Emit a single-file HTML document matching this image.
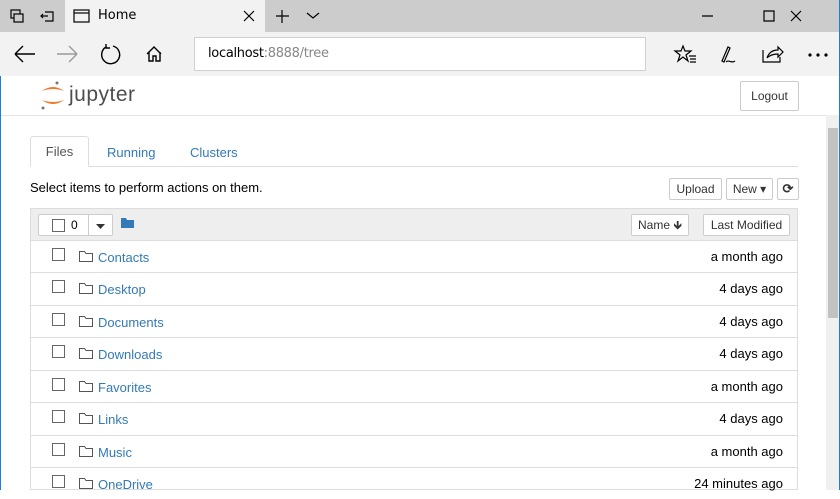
<!DOCTYPE html><html><head><style>
*{box-sizing:border-box;margin:0;padding:0}
body{width:840px;height:490px;overflow:hidden;position:relative;background:#fff;font-family:"Liberation Sans",sans-serif;font-size:13px;color:#000}
.a{position:absolute}
.tb{left:0;top:0;width:840px;height:32px;background:#cccccc}
.tab{left:65px;top:0;width:200px;height:32px;background:#f2f2f2}
.nav{left:0;top:32px;width:840px;height:44px;background:#f2f2f2}
.url{left:194px;top:37px;width:452px;height:34px;background:#fff;border:1px solid #d0d0d0}
.btn{background:#fff;border:1px solid #ccc;border-radius:2px;font-size:12px;color:#333;text-align:center}
.row{left:31px;width:766px;height:32px;border-top:1px solid #ddd}
.cb{position:absolute;left:21px;top:7px;width:13px;height:13px;border:1px solid #666;background:#fff}
.fo{position:absolute;left:48px;top:9px}
.nm{position:absolute;left:67px;top:9px;color:#337ab7;font-size:13px}
.tm{position:absolute;right:14px;top:8px;font-size:13px;color:#000}
</style></head><body>
<div class="a tb"></div>
<div class="a tab"></div>
<div class="a nav"></div>
<svg class="a" style="left:0;top:0" width="840" height="76" fill="none" stroke="#000" stroke-width="1.2">
<rect x="11" y="10" width="9" height="8"/><rect x="14" y="14" width="9" height="8" fill="#ccc"/>
<path d="M45 12h8v9h-8M41 16h7M43 14l-2 2 2 2"/>
<rect x="74" y="10" width="15" height="12"/><path d="M74 13h15"/>
<path d="M244 11l10 10M254 11l-10 10M282 10v13M276 16h13M307 13l6 5 6-5"/>
<path d="M702 16h11M764 11h10v10h-10zM791 11l10 10M801 11l-10 10"/>
<path d="M15 54h20M15 54l8-8M15 54l8 8" stroke-width="1.4"/>
<path d="M57 54h20M77 54l-8-8M77 54l-8 8" stroke="#999" stroke-width="1.4"/>
<path d="M106 47a9 9 0 1 0 7-1M106 44v4h4" stroke-width="1.4"/>
<path d="M147 54l7-7 7 7M149 52v9h4v-5h3v5h4v-9" stroke-width="1.4"/>
<path d="M583 47h8v15h-8zM591 47h8v15h-8z" stroke="#bbb"/>
<path d="M624 45l2.5 6h6.5l-5 4 2 6.5-6-4-6 4 2-6.5-5-4h6.5z" stroke-width="1.3"/>
<path d="M683 46l2 5h6l-5 4 2 6-5-4-5 4 2-6-5-4h6zM689 56h7M690 59h6M690 62h6"/>
<path d="M722 61l6-14 2 1-6 14zM726 62c3-3 5 2 9-1"/>
<path d="M763 50v12h17v-5M767 58c2-6 6-8 11-8v-3l5 5-5 5v-3c-4 0-8 1-11 4"/>
<circle cx="810" cy="55" r="1" fill="#000"/><circle cx="818" cy="55" r="1" fill="#000"/><circle cx="826" cy="55" r="1" fill="#000"/>
</svg>
<div class="a" style="left:98px;top:8px;font-size:13px;font-family:'DejaVu Sans',sans-serif">Home</div>
<div class="a url"></div>
<div class="a" style="left:208px;top:46px;font-size:13px;font-family:'DejaVu Sans',sans-serif;letter-spacing:-.3px">localhost<span style="color:#888">:8888/tree</span></div>
<div class="a" style="left:0;top:76px;width:1px;height:414px;background:#1e7fd6"></div>
<div class="a" style="left:839px;top:0;width:1px;height:490px;background:#1e7fd6"></div>
<svg class="a" style="left:38px;top:80px" width="30" height="32"><circle cx="19" cy="3" r="1.5" fill="#767677"/><circle cx="5" cy="28" r="1.5" fill="#767677"/><path d="M4 11q11-8 22 0q-11-4-22 0z" fill="#f37726"/><path d="M4 20q11 8 22 0q-11 4-22 0z" fill="#f37726"/></svg>
<div class="a" style="left:69px;top:83px;font-size:21px;color:#4e4e4e;font-family:'Liberation Sans',sans-serif;letter-spacing:.5px">jupyter</div>
<div class="a btn" style="left:740px;top:81px;width:59px;height:30px;line-height:28px">Logout</div>
<div class="a" style="left:1px;top:115px;width:826px;height:1px;background:#e5e5e5"></div>
<div class="a" style="left:826px;top:115px;width:13px;height:375px;background:#f0f0f0"></div>
<div class="a" style="left:828px;top:128px;width:10px;height:190px;background:#c2c2c2"></div>
<div class="a" style="left:30px;top:166px;width:768px;height:1px;background:#ddd"></div>
<div class="a" style="left:30px;top:136px;width:59px;height:31px;background:#fff;border:1px solid #ddd;border-bottom-color:#fff;border-radius:3px 3px 0 0;text-align:center;line-height:30px;color:#555">Files</div>
<div class="a" style="left:107px;top:145px;color:#337ab7">Running</div>
<div class="a" style="left:190px;top:145px;color:#337ab7">Clusters</div>
<div class="a" style="left:30px;top:180px">Select items to perform actions on them.</div>
<div class="a btn" style="left:669px;top:178px;width:53px;height:22px;line-height:21px">Upload</div>
<div class="a btn" style="left:726px;top:178px;width:47px;height:22px;line-height:20px">New ▾</div>
<div class="a btn" style="left:777px;top:178px;width:22px;height:22px;line-height:20px;font-size:13px;font-weight:bold">⟳</div>
<div class="a" style="left:30px;top:208px;width:768px;height:282px;border:1px solid #ddd"></div>
<div class="a" style="left:31px;top:209px;width:766px;height:31px;background:#eee"></div>
<div class="a btn" style="left:38px;top:214px;width:75px;height:22px"><div style="position:absolute;left:13px;top:4px;width:13px;height:13px;border:1px solid #666"></div><span style="position:absolute;left:32px;top:3px;color:#000">0</span><div style="position:absolute;left:49px;top:0;width:1px;height:20px;background:#ccc"></div><svg style="position:absolute;left:57px;top:9px" width="9" height="5"><path d="M0 0h9L4.5 5z" fill="#333"/></svg></div>
<svg class="a" style="left:121px;top:217px" width="13" height="11"><path d="M0 1h5l1 2h7v8H0z" fill="#337ab7"/></svg>
<div class="a btn" style="left:631px;top:214px;width:58px;height:22px;line-height:20px">Name 🡻</div>
<div class="a btn" style="left:703px;top:214px;width:87px;height:22px;line-height:20px">Last Modified</div>
<div class="a row" style="top:240px"><div class="cb"></div><svg class="fo" width="14" height="12"><path d="M.5 1.5h5l1.5 2h6.5v8H.5z" fill="none" stroke="#555"/></svg><span class="nm">Contacts</span><span class="tm">a month ago</span></div>
<div class="a row" style="top:272px"><div class="cb"></div><svg class="fo" width="14" height="12"><path d="M.5 1.5h5l1.5 2h6.5v8H.5z" fill="none" stroke="#555"/></svg><span class="nm">Desktop</span><span class="tm">4 days ago</span></div>
<div class="a row" style="top:305px"><div class="cb"></div><svg class="fo" width="14" height="12"><path d="M.5 1.5h5l1.5 2h6.5v8H.5z" fill="none" stroke="#555"/></svg><span class="nm">Documents</span><span class="tm">4 days ago</span></div>
<div class="a row" style="top:337px"><div class="cb"></div><svg class="fo" width="14" height="12"><path d="M.5 1.5h5l1.5 2h6.5v8H.5z" fill="none" stroke="#555"/></svg><span class="nm">Downloads</span><span class="tm">4 days ago</span></div>
<div class="a row" style="top:370px"><div class="cb"></div><svg class="fo" width="14" height="12"><path d="M.5 1.5h5l1.5 2h6.5v8H.5z" fill="none" stroke="#555"/></svg><span class="nm">Favorites</span><span class="tm">a month ago</span></div>
<div class="a row" style="top:402px"><div class="cb"></div><svg class="fo" width="14" height="12"><path d="M.5 1.5h5l1.5 2h6.5v8H.5z" fill="none" stroke="#555"/></svg><span class="nm">Links</span><span class="tm">4 days ago</span></div>
<div class="a row" style="top:435px"><div class="cb"></div><svg class="fo" width="14" height="12"><path d="M.5 1.5h5l1.5 2h6.5v8H.5z" fill="none" stroke="#555"/></svg><span class="nm">Music</span><span class="tm">a month ago</span></div>
<div class="a row" style="top:467px"><div class="cb"></div><svg class="fo" width="14" height="12"><path d="M.5 1.5h5l1.5 2h6.5v8H.5z" fill="none" stroke="#555"/></svg><span class="nm">OneDrive</span><span class="tm">24 minutes ago</span></div>
</body></html>
